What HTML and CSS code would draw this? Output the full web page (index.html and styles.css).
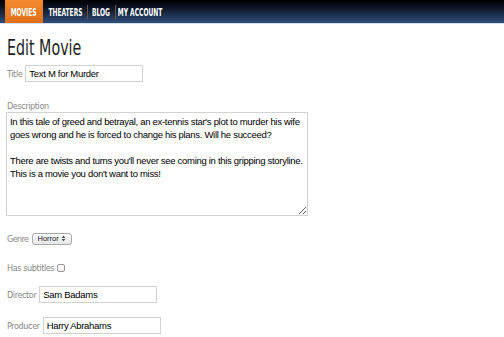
FILE: index.html
```html
<!DOCTYPE html>
<html lang="en">
<head>
    <meta charset="UTF-8">
    <meta name="viewport" content="width=device-width, initial-scale=1.0">
    <title>Edit Movie</title>
    <link rel="stylesheet" href="styles.css">
</head>
<body>
    <div class="nav">
        <a href="#" class="tab tab-movies active"><span>Movies</span></a>
        <a href="#" class="tab tab-theaters"><span>Theaters</span></a>
        <a href="#" class="tab tab-blog sep"><span>Blog</span></a>
        <a href="#" class="tab tab-account sep"><span>My Account</span></a>
    </div>

    <div class="page">
        <h1>Edit Movie</h1>

        <form class="movie-form">
            <div class="field row">
                <label for="title">Title</label>
                <input type="text" id="title" class="text" value="Text M for Murder">
            </div>

            <div class="field desc">
                <label for="description">Description</label>
                <textarea id="description">In this tale of greed and betrayal, an ex-tennis star's plot to murder his wife
goes wrong and he is forced to change his plans. Will he succeed?

There are twists and turns you'll never see coming in this gripping storyline.
This is a movie you don't want to miss!</textarea>
            </div>

            <div class="field row genre">
                <label for="genre">Genre</label>
                <span class="select-wrap">
                    <select id="genre">
                        <option>Horror</option>
                        <option>Comedy</option>
                        <option>Drama</option>
                    </select>
                    <svg class="arrows" width="5" height="7" viewBox="0 0 5 7">
                        <path d="M0.6 3 L2.5 0.7 L4.4 3 Z M0.6 4 L2.5 6.3 L4.4 4 Z" fill="#444"/>
                    </svg>
                </span>
            </div>

            <div class="field row subs">
                <label for="subtitles">Has subtitles</label>
                <input type="checkbox" id="subtitles" class="check">
            </div>

            <div class="field row director">
                <label for="director">Director</label>
                <input type="text" id="director" class="text" value="Sam Badams">
            </div>

            <div class="field row producer">
                <label for="producer">Producer</label>
                <input type="text" id="producer" class="text" value="Harry Abrahams">
            </div>
        </form>
    </div>
</body>
</html>
```

FILE: styles.css
```css
body {
    margin: 0;
    font-family: "Liberation Sans", Arial, sans-serif;
    color: #222;
    background: #fff;
}
.nav {
    display: flex;
    align-items: stretch;
    height: 23px;
    padding-left: 5px;
    background: linear-gradient(to bottom, #000 0%, #0d1626 35%, #2f4f7c 100%);
    border-bottom: 1px solid #d4e0f0;
}
.tab {
    position: relative;
    display: flex;
    align-items: center;
    justify-content: center;
    padding-top: 1px;
    color: #fff;
    text-decoration: none;
    text-transform: uppercase;
    font-family: "DejaVu Sans Condensed", "DejaVu Sans", sans-serif;
    font-stretch: condensed;
    font-weight: bold;
    font-size: 11px;
}
.tab span {
    display: inline-block;
    white-space: nowrap;
    transform: scaleX(0.6);
}
.tab-movies { width: 38px; }
.tab-theaters { width: 44px; }
.tab-blog { width: 28px; }
.tab-account { width: 51px; }
.tab.active {
    background: linear-gradient(to bottom, #f28a30, #e06f18);
}
.tab.sep::before {
    content: "";
    position: absolute;
    left: 0;
    top: 5px;
    bottom: 4px;
    border-left: 1px solid #7a4e2a;
}
.page {
    padding: 0 7px;
}
h1 {
    display: inline-block;
    margin: 11px 0 0;
    font-family: "DejaVu Sans Condensed", "DejaVu Sans", sans-serif;
    font-stretch: condensed;
    font-weight: normal;
    font-size: 22px;
    line-height: 26px;
    color: #1e1e1e;
    transform: scaleX(0.72);
    transform-origin: left center;
}
.movie-form {
    margin-top: 4px;
}
.field label {
    font-family: "DejaVu Sans Condensed", "DejaVu Sans", sans-serif;
    font-stretch: condensed;
    font-size: 9px;
    letter-spacing: -0.4px;
    color: #888;
}
.row {
    display: flex;
    align-items: center;
    height: 17px;
    gap: 3px;
}
.text {
    box-sizing: border-box;
    width: 118px;
    height: 17px;
    padding: 0 3px;
    border: 1px solid #d2d2d2;
    border-radius: 0;
    font-family: "Liberation Sans", Arial, sans-serif;
    font-size: 9.5px;
    letter-spacing: -0.3px;
    color: #000;
    outline: none;
}
.desc {
    margin-top: 18px;
}
.desc label {
    display: block;
    line-height: 12px;
}
.desc textarea {
    display: block;
    box-sizing: border-box;
    width: 302px;
    height: 104px;
    margin: 0 0 0 -1px;
    padding: 2px 3px;
    border: 1px solid #d2d2d2;
    font-family: "Liberation Sans", Arial, sans-serif;
    font-size: 9.5px;
    letter-spacing: -0.3px;
    line-height: 13px;
    color: #000;
    white-space: pre;
    overflow: hidden;
    outline: none;
}
.genre {
    margin-top: 14px;
}
.genre label {
    letter-spacing: -0.6px;
}
.subs {
    margin-top: 12px;
}
.director {
    margin-top: 10px;
}
.producer {
    margin-top: 14px;
}
.select-wrap {
    position: relative;
    display: inline-flex;
}
.select-wrap select {
    appearance: none;
    -webkit-appearance: none;
    box-sizing: border-box;
    width: 40px;
    height: 12px;
    margin: 0;
    padding: 0 0 0 5px;
    border: 1px solid #aaa;
    border-radius: 3px;
    background: linear-gradient(to bottom, #fff, #e6e6e6);
    font-family: "Liberation Sans", Arial, sans-serif;
    font-size: 7.5px;
    line-height: 10px;
    color: #111;
}
.arrows {
    position: absolute;
    right: 6px;
    top: 2.5px;
    pointer-events: none;
}
.check {
    appearance: none;
    -webkit-appearance: none;
    box-sizing: border-box;
    width: 8px;
    height: 8px;
    margin: 1px 0 0 0;
    border: 1px solid #9a9a9a;
    border-radius: 2px;
    background: linear-gradient(to bottom, #fff, #eee);
}
```
